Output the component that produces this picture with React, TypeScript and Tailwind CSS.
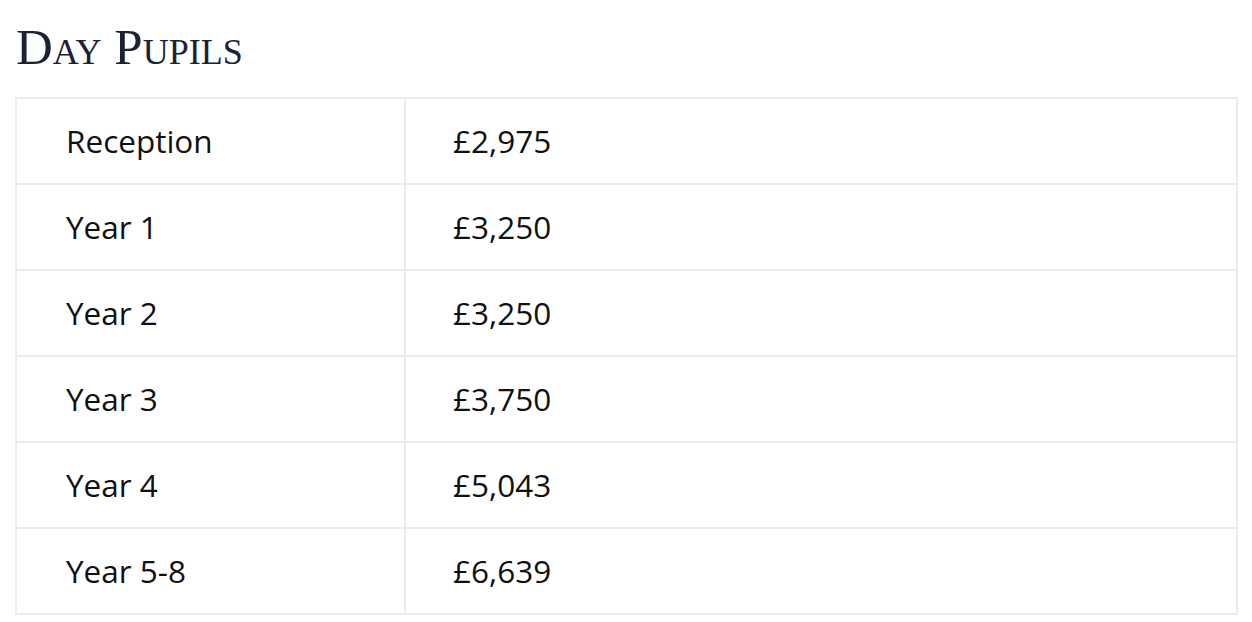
import React from 'react';

const fees = [
  { year: 'Reception', fee: '£2,975' },
  { year: 'Year 1', fee: '£3,250' },
  { year: 'Year 2', fee: '£3,250' },
  { year: 'Year 3', fee: '£3,750' },
  { year: 'Year 4', fee: '£5,043' },
  { year: 'Year 5-8', fee: '£6,639' },
];

const App = () => {
  return (
    <div className="bg-white min-h-screen px-[15px] pt-[14px]">
      {/* Heading */}
      <h2 className="font-['Liberation_Serif',serif] text-[51px] leading-[66px] text-[#1c2233] [font-variant:small-caps] pl-[1px]">
        Day Pupils
      </h2>

      {/* Fees table */}
      <table className="mt-[17px] w-[1223px] border-collapse border-2 border-[#ececec] font-['Open_Sans',sans-serif] text-[31.5px] text-[#111]">
        <tbody>
          {fees.map((row) => (
            <tr key={row.year} className="h-[86px]">
              <td className="w-[389px] border-2 border-[#ececec] pl-[49px] align-middle">{row.year}</td>
              <td className="border-2 border-[#ececec] pl-[47px] align-middle">{row.fee}</td>
            </tr>
          ))}
        </tbody>
      </table>
    </div>
  );
};

export default App;
